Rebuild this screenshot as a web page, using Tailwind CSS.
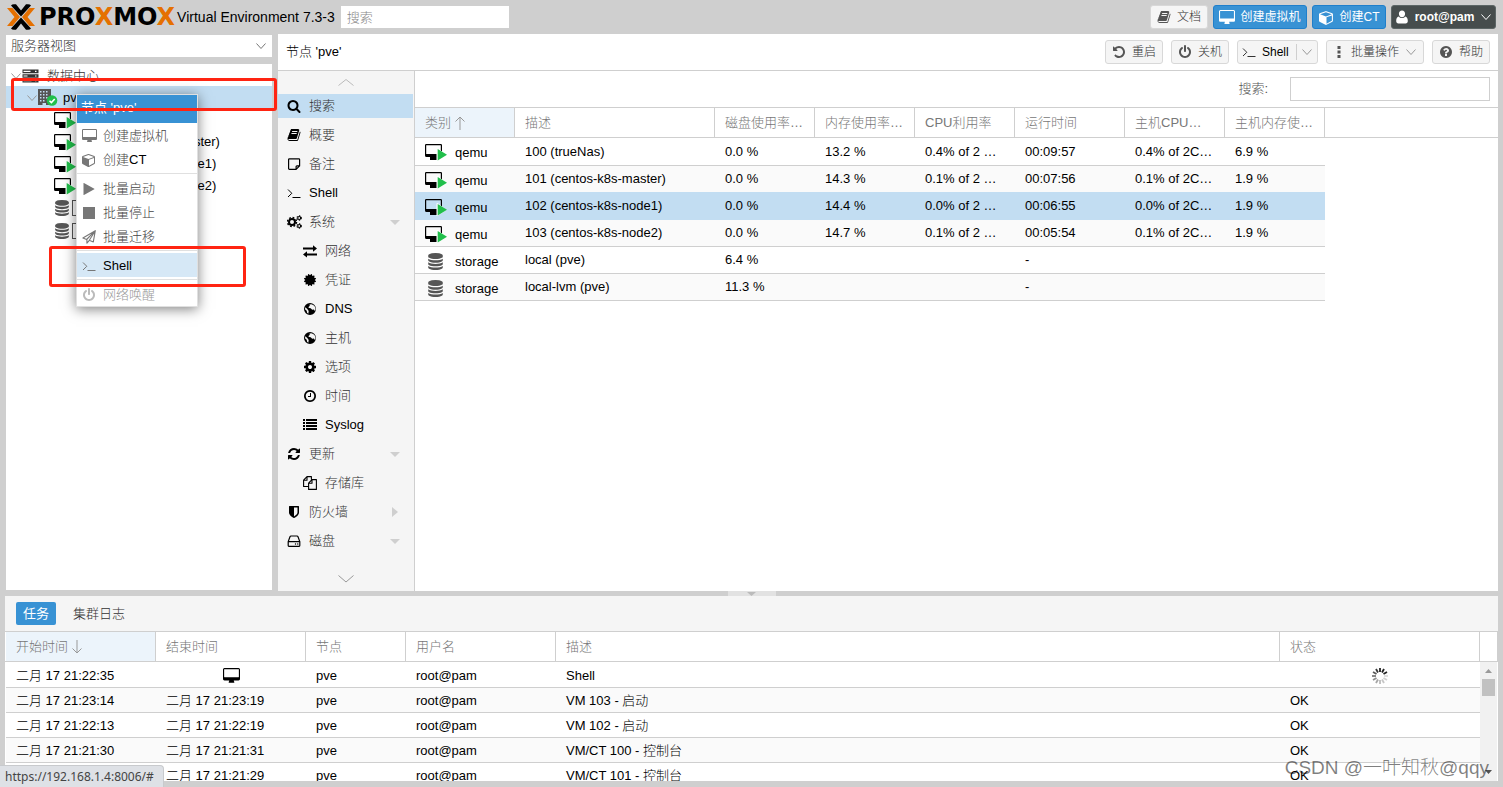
<!DOCTYPE html>
<html lang="zh-CN">
<head>
<meta charset="utf-8">
<title>pve - Proxmox Virtual Environment</title>
<script src="https://cdn.jsdelivr.net/npm/@tailwindcss/browser@4"></script>
</head>
<body class="relative flex h-screen flex-col overflow-hidden bg-[#cfcfcf] font-['Liberation_Sans','Noto_Sans_CJK_SC',sans-serif] text-[13px] leading-4 font-light text-black">

<svg class="hidden" aria-hidden="true">
  <symbol id="i-search" viewBox="0 0 1792 1792"><path d="M1216 832q0-185-131.5-316.5t-316.5-131.5-316.5 131.5-131.5 316.5 131.5 316.5 316.5 131.5 316.5-131.5 131.5-316.5zm512 832q0 52-38 90t-90 38q-54 0-90-38l-343-342q-179 124-399 124-143 0-273.5-55.5t-225-150-150-225-55.5-273.5 55.5-273.5 150-225 225-150 273.5-55.5 273.5 55.5 225 150 150 225 55.5 273.5q0 220-124 399l343 343q37 37 37 90z"/></symbol>
  <symbol id="i-book" viewBox="0 0 1792 1792"><path d="M1703 478q40 57 18 129l-275 906q-19 64-76.500 107.500t-122.500 43.500h-923q-77 0-148.500-53.500t-99.500-131.500q-24-67-2-127 0-4 3-27t4-37q1-8-3-21.500t-3-19.500q2-11 8-21t16.500-23.500 16.500-23.500q23-38 45-91.500t30-91.500q3-10 .5-30t-.5-28q3-11 17-28t17-23q21-36 42-92t25-90q1-9-2.500-32t.5-28q4-13 22-30.500t22-22.500q19-26 42.500-84.500t27.500-96.500q1-8-3-25.500t-2-26.500q2-8 9-18t18-23 17-21q8-12 16.500-30.500t15-35 16-36 19.500-32 26.500-23.500 36-11.500 47.500 5.500l-1 3q38-9 51-9h761q74 0 114 56t18 130l-274 906q-36 119-71.500 153.500t-128.500 34.500h-869q-27 0-38 15-11 16-1 43 24 70 144 70h923q29 0 56-15.500t35-41.500l300-987q7-22 5-57 38 15 59 43zm-1064 2q-4 13 2 22.500t20 9.500h608q13 0 25.500-9.500t16.500-22.500l21-64q4-13-2-22.500t-20-9.500h-608q-13 0-25.500 9.500t-16.500 22.500zm-83 256q-4 13 2 22.500t20 9.500h608q13 0 25.500-9.500t16.500-22.500l21-64q4-13-2-22.500t-20-9.500h-608q-13 0-25.500 9.500t-16.500 22.500z"/></symbol>
  <symbol id="i-desktop" viewBox="-64 0 1920 1792"><path d="M1728 992v-832q0-13-9.500-22.500t-22.500-9.500h-1600q-13 0-22.500 9.500t-9.500 22.500v832q0 13 9.500 22.500t22.500 9.500h1600q13 0 22.500-9.500t9.500-22.500zm128-832v1088q0 66-47 113t-113 47h-544q0 37 16 77.500t32 71 16 43.500q0 26-19 45t-45 19h-512q-26 0-45-19t-19-45q0-14 16-44t32-70 16-78h-544q-66 0-113-47t-47-113v-1088q0-66 47-113t113-47h1600q66 0 113 47t47 113z"/></symbol>
  <symbol id="i-vm" viewBox="0 0 22 17">
    <path fill-rule="evenodd" d="M1.200 0h14.600Q17 0 17 1.200v10.300q0 1.500-1.500 1.500H12v3H5v-3H1.500Q0 13 0 11.500V1.200Q0 0 1.200 0zM1.200 1.200v8.800h14.600V1.200z"/>
    <path fill="#fff" d="M11.500 4.500l1-.5 9 7-9 6h-1z"/><path fill="#21bf4b" d="M12.700 5l9.300 5.700-9.300 5.700z"/>
  </symbol>
  <symbol id="i-cube" viewBox="0 0 1792 1792"><path d="M896 1629l640-349v-636l-640 233v752zm-64-865l698-254-698-254-698 254zm832-252v768q0 35-18 65t-49 47l-704 384q-28 16-61 16t-61-16l-704-384q-31-17-49-47t-18-65v-768q0-40 23-73t61-47l704-256q22-8 44-8t44 8l704 256q38 14 61 47t23 73z"/></symbol>
  <symbol id="i-user" viewBox="0 0 14 14"><path d="M7 7.200c-1.900 0-3.100-1.600-3.100-3.500S5.100.5 7 .5s3.100 1.300 3.100 3.200S8.900 7.200 7 7.200zM3.800 6.400C4.600 7.500 5.700 8 7 8s2.400-.5 3.200-1.600c1.800.3 2.600 2.100 2.600 4.600 0 1.500-.8 2.500-2.200 2.500H3.400C2 13.500 1.200 12.500 1.200 11c0-2.500.8-4.300 2.600-4.600z"/></symbol>
  <symbol id="i-undo" viewBox="0 0 1792 1792"><path d="M1664 896q0 156-61 298t-164 245-245 164-298 61q-172 0-327-72.500t-264-204.500q-7-10-6.500-22.500t8.500-20.500l137-138q10-9 25-9 16 2 23 12 73 95 179 147t225 52q104 0 198.500-40.500t163.500-109.500 109.500-163.500 40.500-198.500-40.500-198.500-109.500-163.500-163.500-109.500-198.500-40.500q-98 0-188 35.500t-160 101.500l137 138q31 30 14 69-17 40-59 40h-448q-26 0-45-19t-19-45v-448q0-42 40-59 39-17 69 14l130 129q107-101 244.500-156.500t284.500-55.500q156 0 298 61t245 164 164 245 61 298z"/></symbol>
  <symbol id="i-power" viewBox="0 0 1792 1792"><path d="M1664 896q0 156-61 298t-164 245-245 164-298 61-298-61-245-164-164-245-61-298q0-182 80.500-343t226.500-270q43-32 95.500-25t83.500 50q32 42 24.500 94.500t-49.500 84.500q-98 74-151.500 181t-53.500 228q0 104 40.500 198.500t109.500 163.500 163.500 109.500 198.500 40.500 198.500-40.500 163.500-109.500 109.500-163.500 40.500-198.500q0-121-53.500-228t-151.500-181q-42-32-49.500-84.500t24.500-94.500q31-43 84-50t95 25q146 109 226.500 270t80.500 343zm-640-768v640q0 52-38 90t-90 38-90-38-38-90v-640q0-52 38-90t90-38 90 38 38 90z"/></symbol>
  <symbol id="i-help" viewBox="0 0 1792 1792"><path d="M1024 1376v-192q0-14-9-23t-23-9h-192q-14 0-23 9t-9 23v192q0 14 9 23t23 9h192q14 0 23-9t9-23zm256-672q0-88-55.500-163t-138.500-116-170-41q-243 0-371 213-15 24 8 42l132 100q7 6 19 6 16 0 25-12 53-68 86-92 34-24 86-24 48 0 85.500 26t37.500 59q0 38-20 61t-68 45q-63 28-115.500 86.500t-52.500 125.500v36q0 14 9 23t23 9h192q14 0 23-9t9-23q0-19 21.500-49.500t54.500-49.500q32-18 49-28.500t46-35 44.500-48 28-60.500 12.500-81zm384 192q0 209-103 385.500t-279.500 279.500-385.500 103-385.500-103-279.500-279.500-103-385.500 103-385.500 279.500-279.500 385.500-103 385.500 103 279.500 279.500 103 385.500z"/></symbol>
  <symbol id="i-cog" viewBox="0 0 1792 1792"><path d="M1152 896q0-106-75-181t-181-75-181 75-75 181 75 181 181 75 181-75 75-181zm512-109v222q0 12-8 23t-20 13l-185 28q-19 54-39 91 35 50 107 138 10 12 10 25t-9 23q-27 37-99 108t-94 71q-12 0-26-9l-138-108q-44 23-91 38-16 136-29 186-7 28-36 28h-222q-14 0-24.500-8.500t-11.500-21.500l-28-184q-49-16-90-37l-141 107q-10 9-25 9-14 0-25-11-126-114-165-168-7-10-7-23 0-12 8-23 15-21 51-66.500t54-70.500q-27-50-41-99l-183-27q-13-2-21-12.500t-8-23.500v-222q0-12 8-23t19-13l186-28q14-46 39-92-40-57-107-138-10-12-10-24 0-10 9-23 26-36 98.500-107.500t94.500-71.500q13 0 26 10l138 107q44-23 91-38 16-136 29-186 7-28 36-28h222q14 0 24.500 8.500t11.500 21.500l28 184q49 16 90 37l142-107q9-9 24-9 13 0 25 10 129 119 165 170 7 8 7 22 0 12-8 23-15 21-51 66.500t-54 70.500q26 50 41 98l183 28q13 2 21 12.500t8 23.500z"/></symbol>
  <symbol id="i-cogs" viewBox="0 0 15 14"><g fill="none" stroke="currentColor"><circle cx="5" cy="7" r="3" stroke-width="2"/><circle cx="5" cy="7" r="4.500" stroke-width="1.500" stroke-dasharray="1.770 1.770"/><circle cx="12.200" cy="3" r="1.500" stroke-width="1.200"/><circle cx="12.200" cy="3" r="2.400" stroke-width="1" stroke-dasharray="1.250 1.250"/><circle cx="12.200" cy="11" r="1.500" stroke-width="1.200"/><circle cx="12.200" cy="11" r="2.400" stroke-width="1" stroke-dasharray="1.250 1.250"/></g></symbol>
  <symbol id="i-refresh" viewBox="0 0 1792 1792"><path d="M1639 1056q0 5-1 7-64 268-268 434.500t-478 166.500q-146 0-282.500-55t-243.500-157l-129 129q-19 19-45 19t-45-19-19-45v-448q0-26 19-45t45-19h448q26 0 45 19t19 45-19 45l-137 137q71 66 161 102t187 36q134 0 250-65t186-179q11-17 53-117 8-23 30-23h192q13 0 22.500 9.500t9.500 22.500zm25-800v448q0 26-19 45t-45 19h-448q-26 0-45-19t-19-45 19-45l138-138q-148-137-349-137-134 0-250 65t-186 179q-11 17-53 117-8 23-30 23h-199q-13 0-22.500-9.500t-9.500-22.500v-7q65-268 270-434.500t480-166.500q146 0 284 55.500t245 156.500l130-129q19-19 45-19t45 19 19 45z"/></symbol>
  <symbol id="i-clock" viewBox="0 0 1792 1792"><path d="M1024 544v448q0 14-9 23t-23 9h-320q-14 0-23-9t-9-23v-64q0-14 9-23t23-9h224v-352q0-14 9-23t23-9h64q14 0 23 9t9 23zm416 352q0-148-73-273t-198-198-273-73-273 73-198 198-73 273 73 273 198 198 273 73 273-73 198-198 73-273zm224 0q0 209-103 385.500t-279.500 279.500-385.500 103-385.500-103-279.500-279.500-103-385.500 103-385.500 279.500-279.500 385.500-103 385.500 103 279.500 279.500 103 385.500z"/></symbol>
  <symbol id="i-db" viewBox="0 0 1792 1792"><path d="M896 768q237 0 443-43t325-127v170q0 69-103 128t-280 93.500-385 34.500-385-34.500-280-93.500-103-128v-170q119 84 325 127t443 43zm0 768q237 0 443-43t325-127v170q0 69-103 128t-280 93.500-385 34.500-385-34.500-280-93.500-103-128v-170q119 84 325 127t443 43zm0-384q237 0 443-43t325-127v170q0 69-103 128t-280 93.500-385 34.500-385-34.500-280-93.500-103-128v-170q119 84 325 127t443 43zm0-1152q208 0 385 34.500t280 93.500 103 128v128q0 69-103 128t-280 93.500-385 34.500-385-34.500-280-93.500-103-128v-128q0-69 103-128t280-93.500 385-34.500z"/></symbol>
  <symbol id="i-shield" viewBox="0 0 1792 1792"><path d="M1344 960v-640h-448v1137q119-63 213-137 235-184 235-360zm192-768v768q0 86-33.500 170.500t-83 150-118 127.500-126.500 103-121 77.500-89.500 49.500-42.500 20q-12 6-26 6t-26-6q-16-7-42.500-20t-89.500-49.500-121-77.500-126.500-103-118-127.500-83-150-33.500-170.500v-768q0-26 19-45t45-19h1152q26 0 45 19t19 45z"/></symbol>
  <symbol id="i-cert" viewBox="0 0 1792 1792"><path d="M1504 896l138 135q30 28 20 70-12 41-52 51l-188 48 53 186q12 41-19 70-29 31-70 19l-186-53-48 188q-10 40-51 52-12 2-19 2-31 0-51-22l-135-138-135 138q-28 30-70 20-41-11-51-52l-48-188-186 53q-41 12-70-19-31-29-19-70l53-186-188-48q-40-10-52-51-10-42 20-70l138-135-138-135q-30-28-20-70 12-41 52-51l188-48-53-186q-12-41 19-70 29-31 70-19l186 53 48-188q10-41 51-51 41-12 70 19l135 139 135-139q29-30 70-19 41 10 51 51l48 188 186-53q41-12 70 19 31 29 19 70l-53 186 188 48q40 10 52 51 10 42-20 70z"/></symbol>
  <symbol id="i-note" viewBox="0 0 14 14"><path fill="none" stroke="currentColor" stroke-width="1.200" stroke-linejoin="round" d="M1.600 2.600a.8.8 0 0 1 .8-.8h9.400a.8.8 0 0 1 .8.8v6.300l-3.500 3.500H2.400a.8.8 0 0 1-.8-.8zM9.100 12.400V9.700a.8.8 0 0 1 .8-.8h2.700"/></symbol>
  <symbol id="i-term" viewBox="0 0 14 14"><path fill="none" stroke="currentColor" d="M1 3.500l3.800 3.800L1 11M5.500 11.500h8"/></symbol>
  <symbol id="i-exchange" viewBox="0 0 14 14"><path d="M0 3.500h10V1.200l4 3.300-4 3.300V5.500H0zM14 11.500H4v2L0 10.500l4-3.300v2.300h10z"/></symbol>
  <symbol id="i-globe" viewBox="0 0 14 14"><path fill-rule="evenodd" d="M7 1a6 6 0 1 1 0 12A6 6 0 0 1 7 1zM8.300 2.200l-1.800.4.3 1.200-1.500 1.400.9.900 1.500.1 1.500 1.600 1.700-.2 1 1.300.5-.8A5 5 0 0 0 8.300 2.200zM2.300 5.300l-.3 2 1.700 1.500.4 1.900 1.200 1 .4-2.600L4.300 7z"/></symbol>
  <symbol id="i-list" viewBox="0 0 14 14"><path d="M0 1h2v2H0zM0 4h2v2H0zM0 7h2v2H0zM0 10h2v2H0zM3 1h11v2H3zM3 4h11v2H3zM3 7h11v2H3zM3 10h11v2H3z"/></symbol>
  <symbol id="i-files" viewBox="0 0 14 14"><path fill="none" stroke="currentColor" stroke-width="1.100" stroke-linejoin="round" d="M5.500 10.500H.6V4.200L4 .6h4.400v3M4 .6v3.600H.6M5.600 7.200L9 3.600h4.400v9.800H5.600zM9 3.600v3.600H5.600"/></symbol>
  <symbol id="i-hdd" viewBox="0 0 14 14"><path fill="none" stroke="currentColor" stroke-width="1.200" stroke-linejoin="round" d="M1.200 7.600L3 2.800q.3-.8 1-.8h6q.7 0 1 .8l1.800 4.800v4q0 .7-.7.7H1.900q-.7 0-.7-.7zM1.200 7.600h11.600"/><circle cx="8.500" cy="10" r=".7"/><circle cx="10.800" cy="10" r=".7"/></symbol>
  <symbol id="i-plane" viewBox="0 0 14 14"><path fill="none" stroke="currentColor" stroke-width="1.100" stroke-linejoin="round" d="M13.300.7L.9 8l3.700 1.500L13.300.7l-2 11.200-4-1.600-2.400 2.900V9.700M7.300 10.300L13.300.7"/></symbol>
  <symbol id="i-play" viewBox="0 0 1792 1792"><path d="M1576 927l-1328 738q-23 13-39.500 3t-16.500-36v-1472q0-26 16.500-36t39.500 3l1328 738q23 13 23 31t-23 31z"/></symbol>
  <symbol id="i-server" viewBox="0 0 17 14"><path fill-rule="evenodd" d="M.5.500h16V4.200H.5zM1.500 1.700v1.200h7V1.700zM.5 5.200h16v3.600H.5zM1.500 6.400v1.200h4V6.400zM.5 9.800h16v3.700H.5zM1.500 11v1.200h8V11zM13 1.700h1.500v1.200H13zM13 6.400h1.500v1.200H13zM13 11h1.500v1.200H13z"/></symbol>
  <symbol id="i-node" viewBox="0 0 20 18"><path fill="#555" fill-rule="evenodd" d="M0 0h13v16H0zM2 2v1.500h1.500V2zM5 2v1.500h1.500V2zM8 2v1.500h1.500V2zM2 5v1.500h1.500V5zM5 5v1.500h1.500V5zM8 5v1.500h1.500V5zM2 8v1.500h1.500V8zM5 8v1.500h1.500V8zM8 8v1.500h1.500V8zM2 11v1.500h1.500V11zM5 11v1.500h1.500V11zM4.500 14v2H8v-2z"/><circle cx="14" cy="11.500" r="5.300" fill="#21bf4b"/><path d="M11.500 11.700l1.900 1.900 3.300-3.600" fill="none" stroke="#fff" stroke-width="1.600"/></symbol>
  <symbol id="i-down" viewBox="0 0 12 12"><path fill="none" stroke="currentColor" d="M1.500 3.500L6 8.500l4.500-5"/></symbol>
</svg>

<header class="flex h-[34px] shrink-0 items-center pr-[7px] pl-[7px]">
  <svg class="h-[26px] w-7 shrink-0" viewBox="0 0 28 26" role="img" aria-label="Proxmox">
    <path fill="#e57000" d="M0 4h5.500l7.500 9-7.500 9H0l7.500-9zM28 4h-5.500L15 13l7.500 9H28l-7.500-9z"/>
    <path d="M4 1.500Q5 .3 7 .3h2l5 6.200 5-6.200h2q2 0 3 1.200L14 12.500zM4 24.500q1 1.200 3 1.200h2l5-6.200 5 6.200h2q2 0 3-1.200L14 13.500z"/>
  </svg>
  <div class="ml-1 font-['DejaVu_Sans'] text-2xl leading-6 font-bold">PRO<span class="text-[#e57000]">X</span>MO<span class="text-[#e57000]">X</span></div>
  <h1 class="ml-[2px] text-sm whitespace-nowrap">Virtual Environment 7.3-3</h1>
  <input type="text" aria-label="搜索" placeholder="搜索" class="ml-[6px] h-[22px] w-[168px] bg-white px-[6px] font-light placeholder:text-[#888]">
  <div class="ml-auto flex gap-[5px] text-xs font-normal">
    <button class="flex h-6 w-[58px] items-center justify-center gap-[6px] rounded-[3px] border border-[#d8d8d8] bg-[#f5f5f5] font-light text-[#333]"><svg class="size-[14px] fill-[#555]"><use href="#i-book"/></svg>文档</button>
    <button class="flex h-6 w-[94px] items-center justify-center gap-[5px] rounded-[3px] border border-[#1f7fcb] bg-[#3892d4] text-white"><svg class="h-[15px] w-4 fill-current"><use href="#i-desktop"/></svg>创建虚拟机</button>
    <button class="flex h-6 w-[74px] items-center justify-center gap-[6px] rounded-[3px] border border-[#1f7fcb] bg-[#3892d4] text-white"><svg class="size-[15px] fill-current"><use href="#i-cube"/></svg>创建CT</button>
    <button class="flex h-6 w-[105px] items-center justify-center gap-[6px] rounded-[3px] border border-[#5c6666] bg-[#464d4d] font-bold text-white"><svg class="size-[14px] fill-current"><use href="#i-user"/></svg>root@pam<svg class="size-3"><use href="#i-down"/></svg></button>
  </div>
</header>

<main class="flex min-h-0 flex-1 gap-[6px] pr-[5px] pl-[6px]">
  <aside class="flex w-[266px] shrink-0 flex-col gap-[7px] pt-px pb-px">
    <div class="relative">
      <select aria-label="视图" class="block h-[22px] w-full appearance-none bg-white px-[5px] font-light text-[#333]"><option>服务器视图</option></select>
      <svg class="pointer-events-none absolute top-[5px] right-[5px] size-3 text-[#777]"><use href="#i-down"/></svg>
    </div>
    <ul class="min-h-0 flex-1 overflow-hidden bg-white">
      <li class="flex h-[22px] items-center pt-[2px] pl-1 text-[#333]"><svg class="size-3 text-[#999]"><use href="#i-down"/></svg><svg class="h-[14px] w-[17px] fill-[#333]"><use href="#i-server"/></svg><span class="ml-2">数据中心</span></li>
      <li class="flex h-[22px] items-center bg-[#c2ddf2] pt-[2px] pl-5"><svg class="size-3 text-[#999]"><use href="#i-down"/></svg><svg class="h-[18px] w-5"><use href="#i-node"/></svg><span class="ml-[5px]">pve</span></li>
      <li class="flex h-[22px] items-center pt-[2px] pl-12"><svg class="h-[17px] w-[22px]"><use href="#i-vm"/></svg><span class="ml-[3px]">100 (trueNas)</span></li>
      <li class="flex h-[22px] items-center pt-[2px] pl-12"><svg class="h-[17px] w-[22px]"><use href="#i-vm"/></svg><span class="ml-[3px]">101 (centos-k8s-master)</span></li>
      <li class="flex h-[22px] items-center pt-[2px] pl-12"><svg class="h-[17px] w-[22px]"><use href="#i-vm"/></svg><span class="ml-[3px]">102 (centos-k8s-node1)</span></li>
      <li class="flex h-[22px] items-center pt-[2px] pl-12"><svg class="h-[17px] w-[22px]"><use href="#i-vm"/></svg><span class="ml-[3px]">103 (centos-k8s-node2)</span></li>
      <li class="flex h-[23px] items-center pl-12"><svg class="size-4 fill-[#555]"><use href="#i-db"/></svg><span class="ml-[2px] h-4 w-[7px] border border-[#555]"></span><span class="ml-[3px]">local (pve)</span></li>
      <li class="flex h-[23px] items-center pl-12"><svg class="size-4 fill-[#555]"><use href="#i-db"/></svg><span class="ml-[2px] h-4 w-[7px] border border-[#555]"></span><span class="ml-[3px]">local-lvm (pve)</span></li>
    </ul>
  </aside>

  <section class="flex min-w-0 flex-1 flex-col bg-white">
    <div class="flex h-[37px] shrink-0 items-center gap-2 border-b border-[#cfcfcf] pr-2 pl-2 text-xs text-[#333]">
      <h2 class="mr-auto text-[13px] text-black">节点 'pve'</h2>
      <button class="flex h-6 w-[58px] items-center justify-center gap-[6px] rounded-[3px] border border-[#d8d8d8] bg-[#f5f5f5]"><svg class="size-[14px] fill-[#555]"><use href="#i-undo"/></svg>重启</button>
      <button class="flex h-6 w-[58px] items-center justify-center gap-[6px] rounded-[3px] border border-[#d8d8d8] bg-[#f5f5f5]"><svg class="size-[14px] fill-[#555]"><use href="#i-power"/></svg>关机</button>
      <button class="flex h-6 w-[81px] items-center rounded-[3px] border border-[#d8d8d8] bg-[#f5f5f5] pl-1"><svg class="size-[14px]"><use href="#i-term"/></svg><span class="ml-[6px] text-black">Shell</span><span class="ml-[7px] h-4 border-l border-[#cfcfcf]"></span><svg class="ml-1 size-3 text-[#999]"><use href="#i-down"/></svg></button>
      <button class="flex h-6 w-[98px] items-center justify-center gap-[6px] rounded-[3px] border border-[#d8d8d8] bg-[#f5f5f5]"><svg class="h-[14px] w-3 fill-[#555]" viewBox="0 0 12 14"><path d="M4.500 1h3v3h-3zM4.500 5.500h3v3h-3zM4.500 10h3v3h-3z"/></svg>批量操作<svg class="size-3 text-[#999]"><use href="#i-down"/></svg></button>
      <button class="flex h-6 w-[58px] items-center justify-center gap-[6px] rounded-[3px] border border-[#d8d8d8] bg-[#f5f5f5]"><svg class="size-[14px] fill-[#555]"><use href="#i-help"/></svg>帮助</button>
    </div>

    <div class="flex min-h-0 flex-1">
      <nav class="flex w-[137px] shrink-0 flex-col border-r border-[#cfcfcf] bg-[#f5f5f5] pr-px text-[#333]">
        <svg class="mx-auto my-2 h-[7px] w-4 shrink-0" viewBox="0 0 16 7"><path fill="none" stroke="#bbb" d="M.5 6.500L8 .5l7.500 6"/></svg>
        <div class="flex flex-col gap-[5px]">
          <a href="#" class="flex h-6 items-center gap-2 bg-[#c2ddf2] pl-[9px]"><svg class="size-[14px] fill-black"><use href="#i-search"/></svg>搜索</a>
          <a href="#" class="flex h-6 items-center gap-2 pl-[9px]"><svg class="size-[14px] fill-black"><use href="#i-book"/></svg>概要</a>
          <a href="#" class="flex h-6 items-center gap-2 pl-[9px]"><svg class="size-[14px] text-black"><use href="#i-note"/></svg>备注</a>
          <a href="#" class="flex h-6 items-center gap-2 pl-[9px] text-black"><svg class="size-[14px] text-black"><use href="#i-term"/></svg>Shell</a>
          <a href="#" class="flex h-6 items-center gap-2 pr-[13px] pl-[9px]"><svg class="-mr-px h-[14px] w-[15px] text-black"><use href="#i-cogs"/></svg>系统<svg class="ml-auto h-[5px] w-[10px] fill-[#cfcfcf]" viewBox="0 0 10 5"><path d="M0 0h10L5 5z"/></svg></a>
          <a href="#" class="flex h-6 items-center gap-2 pl-[25px]"><svg class="size-[14px] fill-black"><use href="#i-exchange"/></svg>网络</a>
          <a href="#" class="flex h-6 items-center gap-2 pl-[25px]"><svg class="size-[14px] fill-black"><use href="#i-cert"/></svg>凭证</a>
          <a href="#" class="flex h-6 items-center gap-2 pl-[25px] text-black"><svg class="size-[14px] fill-black"><use href="#i-globe"/></svg>DNS</a>
          <a href="#" class="flex h-6 items-center gap-2 pl-[25px]"><svg class="size-[14px] fill-black"><use href="#i-globe"/></svg>主机</a>
          <a href="#" class="flex h-6 items-center gap-2 pl-[25px]"><svg class="size-[14px] fill-black"><use href="#i-cog"/></svg>选项</a>
          <a href="#" class="flex h-6 items-center gap-2 pl-[25px]"><svg class="size-[14px] fill-black"><use href="#i-clock"/></svg>时间</a>
          <a href="#" class="flex h-6 items-center gap-2 pl-[25px] text-black"><svg class="size-[14px] fill-black"><use href="#i-list"/></svg>Syslog</a>
          <a href="#" class="flex h-6 items-center gap-2 pr-[13px] pl-[9px]"><svg class="size-[14px] fill-black"><use href="#i-refresh"/></svg>更新<svg class="ml-auto h-[5px] w-[10px] fill-[#cfcfcf]" viewBox="0 0 10 5"><path d="M0 0h10L5 5z"/></svg></a>
          <a href="#" class="flex h-6 items-center gap-2 pl-[25px]"><svg class="size-[14px] text-black"><use href="#i-files"/></svg>存储库</a>
          <a href="#" class="flex h-6 items-center gap-2 pr-[15px] pl-[9px]"><svg class="size-[14px] fill-black"><use href="#i-shield"/></svg>防火墙<svg class="ml-auto h-[10px] w-[6px] fill-[#cfcfcf]" viewBox="0 0 6 10"><path d="M0 0v10l6-5z"/></svg></a>
          <a href="#" class="flex h-6 items-center gap-2 pr-[13px] pl-[9px]"><svg class="size-[14px] text-black"><use href="#i-hdd"/></svg>磁盘<svg class="ml-auto h-[5px] w-[10px] fill-[#cfcfcf]" viewBox="0 0 10 5"><path d="M0 0h10L5 5z"/></svg></a>
        </div>
        <svg class="mx-auto mt-auto mb-2 h-2 w-4 shrink-0" viewBox="0 0 16 8"><path fill="none" stroke="#999" d="M.5.500L8 7l7.500-6.500"/></svg>
      </nav>

      <div class="min-w-0 flex-1">
        <div class="flex h-[37px] items-center justify-end border-b border-[#cfcfcf] pr-2">
          <label for="filter" class="mr-[22px] text-[#555]">搜索:</label>
          <input id="filter" type="text" class="h-6 w-[200px] border border-[#cfcfcf] px-1">
        </div>
        <div class="border-b border-[#cfcfcf]">
          <div class="flex h-[29px] items-center text-[#777] [&>*]:h-full [&>*]:truncate [&>*]:border-r [&>*]:border-[#cfcfcf] [&>*]:px-[10px] [&>*]:text-left [&>*]:leading-[29px]" role="row">
            <button class="flex w-[100px] items-center gap-1 bg-[#ecf4fb]">类别<svg class="h-[14px] w-[10px]" viewBox="0 0 10 14"><path fill="none" stroke="#999" d="M5 14V1M.5 5.500L5 1l4.500 4.500"/></svg></button>
            <button class="w-[200px]">描述</button>
            <button class="w-[100px]">磁盘使用率百分比</button>
            <button class="w-[100px]">内存使用率百分比</button>
            <button class="w-[100px]">CPU利用率</button>
            <button class="w-[110px]">运行时间</button>
            <button class="w-[100px]">主机CPU使用率</button>
            <button class="w-[100px]">主机内存使用率</button>
          </div>
        </div>
        <table class="w-[910px] table-fixed border-separate border-spacing-0 [&_td]:h-[27px] [&_td]:truncate [&_td]:border-b [&_td]:border-[#cfcfcf] [&_td]:px-[10px]">
          <colgroup><col class="w-[100px]"><col class="w-[200px]"><col class="w-[100px]"><col class="w-[100px]"><col class="w-[100px]"><col class="w-[110px]"><col class="w-[100px]"><col class="w-[100px]"></colgroup>
          <tbody>
            <tr class="[&>td]:h-[28px]"><td><div class="flex items-end gap-2 pt-[2px]"><svg class="h-[17px] w-[22px]"><use href="#i-vm"/></svg>qemu</div></td><td>100 (trueNas)</td><td>0.0 %</td><td>13.2 %</td><td>0.4% of 2 CPUs</td><td>00:09:57</td><td>0.4% of 2CPUs</td><td>6.9 %</td></tr>
            <tr class="bg-[#fafafa] [&>td]:border-[#c2ddf2]!"><td><div class="flex items-end gap-2 pt-[2px]"><svg class="h-[17px] w-[22px]"><use href="#i-vm"/></svg>qemu</div></td><td>101 (centos-k8s-master)</td><td>0.0 %</td><td>14.3 %</td><td>0.1% of 2 CPUs</td><td>00:07:56</td><td>0.1% of 2CPUs</td><td>1.9 %</td></tr>
            <tr class="bg-[#c2ddf2] [&>td]:border-[#c2ddf2]!"><td><div class="flex items-end gap-2 pt-[2px]"><svg class="h-[17px] w-[22px]"><use href="#i-vm"/></svg>qemu</div></td><td>102 (centos-k8s-node1)</td><td>0.0 %</td><td>14.4 %</td><td>0.0% of 2 CPUs</td><td>00:06:55</td><td>0.0% of 2CPUs</td><td>1.9 %</td></tr>
            <tr class="bg-[#fafafa]"><td><div class="flex items-end gap-2 pt-[2px]"><svg class="h-[17px] w-[22px]"><use href="#i-vm"/></svg>qemu</div></td><td>103 (centos-k8s-node2)</td><td>0.0 %</td><td>14.7 %</td><td>0.1% of 2 CPUs</td><td>00:05:54</td><td>0.1% of 2CPUs</td><td>1.9 %</td></tr>
            <tr><td><div class="flex items-end gap-[11px] pt-[2px] pl-[2px]"><svg class="h-[17px] w-[17px] fill-[#555]"><use href="#i-db"/></svg>storage</div></td><td>local (pve)</td><td>6.4 %</td><td></td><td></td><td>-</td><td></td><td></td></tr>
            <tr class="bg-[#fafafa]"><td><div class="flex items-end gap-[11px] pt-[2px] pl-[2px]"><svg class="h-[17px] w-[17px] fill-[#555]"><use href="#i-db"/></svg>storage</div></td><td>local-lvm (pve)</td><td>11.3 %</td><td></td><td></td><td>-</td><td></td><td></td></tr>
          </tbody>
        </table>
      </div>
    </div>
  </section>
</main>

<div class="flex h-[5px] shrink-0 items-center justify-center" role="separator">
  <div class="flex h-[5px] w-12 items-center justify-center bg-[#e2e2e2]"><svg class="h-1 w-[9px] fill-[#bbb]" viewBox="0 0 9 4"><path d="M0 0h9L4.500 4z"/></svg></div>
</div>

<section class="mr-[5px] mb-[6px] ml-[5px] flex h-[185px] shrink-0 flex-col overflow-hidden bg-white">
  <div class="flex h-9 shrink-0 items-center gap-[7px] border-b border-[#cfcfcf] bg-[#f5f5f5] pl-[11px]" role="tablist">
    <button role="tab" aria-selected="true" class="h-[23px] w-10 rounded-[2px] bg-[#3892d4] font-normal text-white">任务</button>
    <button role="tab" aria-selected="false" class="h-[23px] px-[10px] text-[#333]">集群日志</button>
  </div>
  <div class="flex h-[30px] shrink-0 border-b border-[#cfcfcf] pl-px text-[#777] [&>button]:border-r [&>button]:border-[#cfcfcf] [&>button]:px-[10px] [&>button]:text-left" role="row">
    <button class="flex w-[150px] items-center gap-1 bg-[#ecf4fb]">开始时间<svg class="h-[14px] w-[10px]" viewBox="0 0 10 14"><path fill="none" stroke="#999" d="M5 0v13M.5 8.500L5 13l4.500-4.500"/></svg></button>
    <button class="w-[150px]">结束时间</button>
    <button class="w-[100px]">节点</button>
    <button class="w-[150px]">用户名</button>
    <button class="flex-1">描述</button>
    <button class="w-[200px]">状态</button>
    <span class="w-[18px] border-r border-[#cfcfcf]"></span>
  </div>
  <div class="flex min-h-0 flex-1 pl-px">
    <div class="min-w-0 flex-1 overflow-hidden">
      <table class="w-full table-fixed border-separate border-spacing-0 [&_td]:h-[25px] [&_td]:truncate [&_td]:border-b [&_td]:border-[#cfcfcf] [&_td]:px-[10px] [&_td]:pt-[2px]">
        <colgroup><col class="w-[150px]"><col class="w-[150px]"><col class="w-[100px]"><col class="w-[150px]"><col><col class="w-[200px]"></colgroup>
        <tbody>
          <tr class="[&>td]:h-[26px]"><td>二月 17 21:22:35</td><td><svg class="mx-auto h-4 w-[17px]"><use href="#i-desktop"/></svg></td><td>pve</td><td>root@pam</td><td>Shell</td><td>
            <svg class="mx-auto size-4" viewBox="-8 -8 16 16" stroke="#222" stroke-width="1.800"><path d="M0-4v-4"/><path d="M2-3.500l2-3.500"/><path d="M3.500-2l3.500-2"/><path opacity=".15" d="M4 0h4"/><path opacity=".2" d="M3.500 2l3.500 2"/><path opacity=".25" d="M2 3.500l2 3.500"/><path opacity=".3" d="M0 4v4"/><path opacity=".4" d="M-2 3.500l-2 3.500"/><path opacity=".5" d="M-3.500 2l-3.500 2"/><path opacity=".6" d="M-4 0h-4"/><path opacity=".75" d="M-3.500-2l-3.500-2"/><path opacity=".9" d="M-2-3.500l-2-3.500"/></svg></td></tr>
          <tr class="bg-[#fafafa]"><td>二月 17 21:23:14</td><td>二月 17 21:23:19</td><td>pve</td><td>root@pam</td><td>VM 103 - 启动</td><td>OK</td></tr>
          <tr><td>二月 17 21:22:13</td><td>二月 17 21:22:19</td><td>pve</td><td>root@pam</td><td>VM 102 - 启动</td><td>OK</td></tr>
          <tr class="bg-[#fafafa]"><td>二月 17 21:21:30</td><td>二月 17 21:21:31</td><td>pve</td><td>root@pam</td><td>VM/CT 100 - 控制台</td><td>OK</td></tr>
          <tr><td>二月 17 21:21:28</td><td>二月 17 21:21:29</td><td>pve</td><td>root@pam</td><td>VM/CT 101 - 控制台</td><td>OK</td></tr>
        </tbody>
      </table>
    </div>
    <div class="mr-px flex w-[17px] shrink-0 flex-col items-center bg-[#f1f1f1] py-[7px]">
      <svg class="h-1 w-[7px] fill-[#999]" viewBox="0 0 7 4"><path d="M0 4h7L3.500 0z"/></svg>
      <div class="mt-[6px] h-[17px] w-[13px] bg-[#c1c1c1]"></div>
      <svg class="mt-auto h-1 w-[7px] fill-[#505050]" viewBox="0 0 7 4"><path d="M0 0h7L3.500 4z"/></svg>
    </div>
  </div>
</section>

<!-- node context menu -->
<div role="menu" class="absolute top-[94px] left-[76px] w-[122px] border border-[#e0e0e0] bg-white text-[#444] shadow-[0_2px_12px_rgba(0,0,0,0.5)]">
  <div class="h-7 bg-[#3892d4] px-1 pt-[5px] font-normal text-white">节点 'pve'</div>
  <button role="menuitem" class="flex h-6 w-full items-center gap-[6px] pt-px pl-[5px]"><svg class="h-[14px] w-[15px] fill-[#777]"><use href="#i-desktop"/></svg>创建虚拟机</button>
  <button role="menuitem" class="flex h-6 w-full items-center gap-[7px] pt-px pl-[5px]"><svg class="size-[14px] fill-[#777]"><use href="#i-cube"/></svg><span>创建<span class="text-black">CT</span></span></button>
  <div class="my-[2px] h-px bg-[#e0e0e0]"></div>
  <button role="menuitem" class="flex h-6 w-full items-center gap-[7px] pt-px pl-[5px]"><svg class="size-[14px] fill-[#777]"><use href="#i-play"/></svg>批量启动</button>
  <button role="menuitem" class="flex h-6 w-full items-center gap-[7px] pt-px pl-[5px]"><span class="m-px size-3 bg-[#777]"></span>批量停止</button>
  <button role="menuitem" class="flex h-6 w-full items-center gap-[7px] pt-px pl-[5px]"><svg class="size-[14px] text-[#777]"><use href="#i-plane"/></svg>批量迁移</button>
  <div class="my-[2px] h-px bg-[#e0e0e0]"></div>
  <button role="menuitem" class="flex h-6 w-full items-center gap-[7px] bg-[#d6e8f6] pt-px pl-[5px] text-black"><svg class="size-[14px] text-[#777]"><use href="#i-term"/></svg>Shell</button>
  <div class="my-[2px] h-px bg-[#e0e0e0]"></div>
  <button role="menuitem" disabled class="flex h-6 w-full items-center gap-[7px] pt-px pl-[5px] text-[#999]"><svg class="size-[14px] fill-[#bbb]"><use href="#i-power"/></svg>网络唤醒</button>
</div>

<!-- highlight frames -->
<div class="pointer-events-none absolute top-[78px] left-[11px] h-[33px] w-[266px] rounded-[3px] border-3 border-[#ff2412]"></div>
<div class="pointer-events-none absolute top-[246px] left-[49px] h-[41px] w-[197px] rounded-[3px] border-3 border-[#ff2412]"></div>

<!-- browser link status -->
<div class="absolute bottom-0 left-0 h-[22px] w-[164px] rounded-tr-[4px] border-t border-r border-[#c8cacd] bg-[#dee1e6] pl-[5px] font-['Noto_Sans'] text-xs leading-[21px] font-normal whitespace-nowrap text-[#444]">https://192.168.1.4:8006/#</div>
<div class="pointer-events-none absolute right-[14px] bottom-[7px] text-[19px] leading-6 whitespace-nowrap text-black/50">CSDN @一叶知秋@qqy</div>
</body>
</html>
